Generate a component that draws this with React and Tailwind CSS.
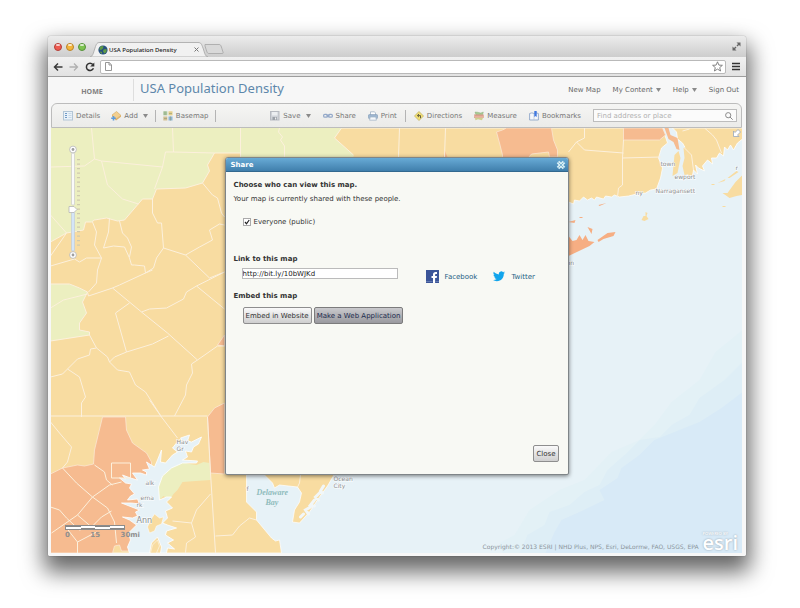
import React from "react";

const ui = "font-['DejaVu_Sans','Verdana',sans-serif]";

const countyLines = [
  "M92 128L95 159L85 166L51 167",
  "M95 159L102 161L163 167",
  "M173 128L174 152L166 152L163 167L155 189",
  "M174 152L215 153L241 153L241 128M241 153V157",
  "M102 161L108 185L123 199L139 204",
  "M51 215L67 233L51 256",
  "M51 242L67 233L84 230L86 222L92 222L95 220L107 218L118 221L125 220L143 199L153 199L157 189L186 188L203 183L210 171L208 165L215 153",
  "M51 266L75 259L80 262L87 258L102 258L95 245L97 232L93 222",
  "M102 258L98 270L97 283L89 292",
  "M110 218L109 232L104 248L114 246L125 247L130 258L132 265L135 265L145 266L146 273L120 285L113 288",
  "M120 221L123 233L128 238L132 247L130 257",
  "M153 199L153 213L158 223L162 223L164 248L157 258L154 268L146 273",
  "M164 248L186 255L210 278L225 272",
  "M186 255L200 247L213 240L210 230L220 224L225 225",
  "M203 183L213 195L218 198L222 213L225 217",
  "M51 284L70 284L80 288L88 292L83 302L87 313L80 323L80 330L90 332L90 335L51 341",
  "M51 308L64 300L88 294",
  "M88 292L89 296L113 288M153 270L146 273",
  "M113 288L142 312L168 333L198 360L218 346L225 346",
  "M142 312L150 309L167 308L184 299L187 292L197 286L225 272M197 286L225 309",
  "M130 303L116 313L127 352",
  "M110 362L115 357L127 352L153 344L169 336",
  "M90 335L97 348L108 357L110 362L118 370L130 372L136 385L146 392L162 417L178 438",
  "M97 348L91 349L90 355L78 359L68 369L63 374L51 377",
  "M68 369L80 377L86 397L82 403L82 417",
  "M198 360L192 364L193 373L187 385L186 395L175 416",
  "M51 416L208 416M150 400L162 417",
  "M51 422L60 433L72 447L68 462L63 468L77 483L93 497L110 485L122 482",
  "M95 465L105 472L107 480L113 485M112 463H131V478H112Z",
  "M93 497L78 515L52 533M51 507L60 510L67 518L80 530L92 527L102 517L112 511M78 515L92 527",
  "M93 497L108 508L115 522L117 543M67 528L78 542V553M78 542L97 532",
  "M208 417L211 473L216 553M211 494L197 510L192 523L196 537L187 543L186 553",
  "M216 536L233 535L240 526L250 518L257 520M173 521L192 523",
  "M280 128L279 132L283 137L281 140L285 146L285 157",
  "M342 128L335 138L354 155",
  "M400 128L399 157M446 128L445 157",
  "M301 475L300 483L298 487",
];

const eastLines = [
  "M624 140L623 158L661 157M623 158V185L619 188L618 197",
  "M624 153L585 150L577 142L569 152M585 128V138L577 142",
  "M705 128L713 135L717 140L722 153M683 131L690 129M685 148L692 155L694 170",
];

function MapCanvas() {
  return (
    <svg
      className="absolute inset-0 h-full w-full"
      viewBox="51 128 692 425"
      preserveAspectRatio="xMidYMid slice"
      aria-hidden="true"
    >
      <rect x="51" y="128" width="692" height="425" fill="#e7f2f7" />
      {/* ocean depth */}
      <path d="M743 330L716 352L700 380L672 402L655 425L640 440L612 452L585 480L560 490L530 510L515 535L500 543L503 553H743Z" fill="#e3f1f6" />
      <path d="M743 362L725 380L700 398L690 415L672 425L660 437L640 440L625 455L608 470L600 485L585 492L570 505L550 512L545 525L528 535L520 553H743Z" fill="#deeef6" />
      <path d="M743 392L722 408L700 422L680 430L655 440L640 455L622 468L618 478L600 490L605 500L580 512L562 520L555 532L546 553H743Z" fill="#d8eaf7" />

      {/* mainland */}
      <path d="M51 128H625L663 128L668 143L662 148L659 158L663 168L661 178L657 189L651 190L646 193L637 194L629 196L620 197L615 195L612 197L606 196L604 199L597 197L595 200L592 198L588 200L584 197L580 201L575 200L574 204L569 202L556 206L335 474L328 486L320 497L310 512L300 523L293 522L295 510L300 502L302 493L298 487L280 485L275 488L273 483L265 475L247 475L247 502L257 512L257 520L272 538L276 541L280 540L282 553H51Z" fill="#f8dca1" stroke="#fff" strokeWidth="0.7" />
      <path d="M673 128H743V139L738 143L734 150L731 145L728 150L725 147L724 156L720 153L717 158L712 158L713 164L708 160L703 166L705 171L699 168L696 165L698 174L694 170L693 176L688 176L690 165L687 150L683 143L678 139L677 132Z" fill="#f8dca1" stroke="#fff" strokeWidth="0.8" />
      <path d="M675 155L679 151L681 158L678 173L673 176L674 165Z" fill="#f8dca1" />
      <path d="M684 148L690 146L693 158L691 174L685 175L683 166L685 158Z" fill="#f8dca1" />
      <path d="M743 175L736 182L728 193L723 193L730 198L737 196L743 195ZM642 220L644 216L646 216V212L648 213L647 216L649 219L645 221ZM718 183L726 179L725 181ZM728 178L737 171L739 172L730 178ZM712 184H715V185H712ZM723 206H726V207H723Z" fill="#f8dca1" />

      {/* low density */}
      <path d="M51 128H342L335 138L354 155V157H241V153H215L208 165L210 171L203 183L186 188L157 189L153 199H143L125 220L118 221L107 218L95 220L92 222H86L84 230L67 233L51 242Z" fill="#ecefc0" />
      <path d="M51 284L70 284L80 288L88 292L83 302L87 313L80 323V330L90 332V335L51 341Z" fill="#ecefc0" />

      {/* high density */}
      <path d="M103 417H126L127 430L133 443L147 453L152 462L152 500L140 530L130 551H122L120 545L115 546L113 553H51V474L63 468L78 465L85 466L94 464L95 450Z" fill="#f6bb90" stroke="#fbe6d2" strokeWidth="0.8" />
      <path d="M208 417L215 408L225 403V474L211 473ZM225 335L218 345L225 346Z" fill="#f6bb90" stroke="#fbe6d2" strokeWidth="0.8" />
      <path d="M497 132L503 130L507 128H552L554 140L558 150V157H550L549 152L532 154L527 160H503V155L500 143Z" fill="#f6bb90" stroke="#fbe6d2" strokeWidth="0.8" />
      <path d="M445 150L448 157H444Z" fill="#f6bb90" />
      <path d="M624 128H663L666 135L660 140H624Z" fill="#f6bb90" stroke="#fbe6d2" strokeWidth="0.8" />
      <path d="M665 128H669L671 135L678 138L680 150L677 149L674 142L669 139Z" fill="#f6bb90" />
      <path d="M569 236L573 241L577 240L580 235L583 240L586 235L589 241L595 242L590 246L569 256ZM598 240L608 233L616 232L614 236L604 239L599 242ZM569 222L576 220L575 223ZM588 227L593 229L592 234ZM599 205L607 203L600 206ZM580 217H583V218H580Z" fill="#f6ae83" />

      {/* Chesapeake Bay */}
      <path d="M168 468L183 462L190 464L197 465L204 462L210 463L211 480L196 481L183 482L178 490L174 494L170 500L164 496L160 500L158 487L162 476Z" fill="#ecefc0" />
      <path
        d="M202 437L199 444L194 447L192 452L186 451L188 457L183 460L198 461L197 463L183 463L172 468L163 476L159 487L160 500L167 497L172 497L167 502L173 508L166 511L168 518L163 523L168 525L177 528L167 531L166 535L174 540L168 543L175 549L168 548L167 553H161L162 547L158 537L152 543L150 553H130L128 547L131 540L129 533L137 525L130 520L123 517L133 518L138 516L136 512L140 510L122 503L132 503L140 504L138 499L128 500L131 496L135 494L130 488L132 484L126 483L120 478L126 479L123 475L131 478L138 480L133 473L141 473L147 475L147 472L143 470L150 469L147 462L155 467L158 460L162 450L161 462L166 463L173 455L178 452L173 448L177 443L183 441L181 438L190 435L188 441L192 442Z"
        fill="#e7f2f7"
        stroke="#fff"
        strokeWidth="0.8"
        strokeLinejoin="round"
      />
      <path d="M155 514L160 518L164 517L162 524L157 526L155 531L150 533L148 527L151 520ZM153 545L158 540L160 546L157 553H151Z" fill="#f8dca1" stroke="#fff" strokeWidth="0.5" />
      <path d="M324 486l-3 5 2 2M320 493l-4 4 3 3M315 500l-4 5 4 1M311 507l-5 3 3 4M304 514l-3 3" stroke="#f2f7f8" strokeWidth="3" strokeLinecap="round" fill="none" />

      <g fill="none" stroke="#fcf0dc" strokeWidth="1" strokeLinejoin="round">
        {countyLines.concat(eastLines).map((d) => (
          <path key={d} d={d} />
        ))}
      </g>

      <g
        fontFamily="'DejaVu Sans', sans-serif"
        fontSize="6"
        fill="#8d8f90"
        stroke="#fff"
        strokeWidth="1.4"
        strokeOpacity="0.7"
        paintOrder="stroke"
      >
        <text x="177" y="444">Hav</text>
        <text x="177" y="451">Gr</text>
        <text x="146" y="485">alk</text>
        <text x="141" y="500">erna</text>
        <text x="137" y="507">rk</text>
        <text x="137" y="523" fontSize="8">Ann</text>
        <text x="334" y="481">Ocean</text>
        <text x="334" y="488">City</text>
        <text x="247" y="491">f</text>
        <text x="661" y="166">town</text>
        <text x="675" y="179">ewport</text>
        <text x="656" y="193">Narragansett</text>
        <text x="636" y="195">ny</text>
        <text x="567" y="265">on</text>
        <text x="736" y="170">r</text>
      </g>
      <g fontFamily="'Liberation Serif', serif" fontStyle="italic" fontWeight="bold" fontSize="8" fill="#8fbcbc">
        <text x="257" y="495">Delaware</text>
        <text x="266" y="505">Bay</text>
      </g>
    </svg>
  );
}

function Caret() {
  return (
    <svg className="h-1 w-[5px]" viewBox="0 0 5 4" aria-hidden="true">
      <path d="M0 0H5L2.5 4Z" fill="#8a8a8a" />
    </svg>
  );
}

const icons = {
  details: (
    <>
      <rect x="0.5" y="0.5" width="9" height="8.5" fill="#eaf2f9" stroke="#b3c6d6" />
      <path d="M2 2.5H4M2 4.5H4M2 6.5H4" stroke="#6f9ac6" />
      <path d="M5.5 2.5H8.5M5.5 4.5H8.5M5.5 6.5H8.5" stroke="#c6d8e7" />
    </>
  ),
  add: (
    <>
      <path d="M1 4L5.5 0.5L10 4.5L5 8Z" fill="#f3cf8e" stroke="#d3a65c" strokeWidth="0.6" />
      <path d="M1 4L5 8L10 4.5V5.8L5 9.4L1 5.5Z" fill="#dcb069" />
      <path d="M2.5 5V9.5M0.2 7.2H4.8" stroke="#5d9bdc" strokeWidth="1.6" />
    </>
  ),
  basemap: (
    <>
      <rect x="0.3" y="0.3" width="4" height="4" fill="#a9c79d" />
      <rect x="5.5" y="0.3" width="4" height="4" fill="#e5cf88" />
      <rect x="0.3" y="5.5" width="4" height="4" fill="#d3bf93" />
      <rect x="5.5" y="5.5" width="4" height="4" fill="#8fb5d2" />
      <path d="M2 0.5V4M7.5 5.5V9.5M1 7.5H4M6 2.5H9" stroke="#8f9a7c" strokeWidth="0.6" />
    </>
  ),
  save: (
    <>
      <rect x="0.5" y="0.5" width="8.5" height="8.5" fill="#cfd2d8" stroke="#b7bac1" />
      <rect x="2" y="1" width="5.5" height="3.5" fill="#eceef1" />
      <rect x="2.5" y="6" width="4.5" height="3" fill="#9ca1a9" />
      <rect x="5" y="6.5" width="1.2" height="2" fill="#eee" />
    </>
  ),
  share: (
    <g fill="none" stroke="#94a9c9" strokeWidth="1.2">
      <rect x="0.6" y="3.4" width="4" height="2.8" rx="1.3" />
      <rect x="5.4" y="3.4" width="4" height="2.8" rx="1.3" />
      <path d="M3.2 4.8H6.8" />
    </g>
  ),
  print: (
    <>
      <path d="M2.5 4V0.8H6.5L7.5 2V4" fill="#fff" stroke="#9fb1c4" strokeWidth="0.8" />
      <rect x="0.4" y="3.6" width="9.2" height="4" rx="1" fill="#9fb8d2" stroke="#7f98b3" strokeWidth="0.6" />
      <path d="M2.2 6H7.8L8.4 9.2H1.6Z" fill="#f5f8fb" stroke="#9fb1c4" strokeWidth="0.7" />
    </>
  ),
  directions: (
    <>
      <path d="M5 0.5L9.5 5L5 9.5L0.5 5Z" fill="#f3e074" stroke="#c3b468" strokeWidth="0.8" />
      <path d="M6.5 7.2V4.6H4M5 3.1L3.3 4.6L5 6.1" fill="none" stroke="#55503a" strokeWidth="0.9" />
    </>
  ),
  measure: (
    <>
      <path d="M1 1L2 4H8.6L9.3 1L6.8 2L3.5 1.2Z" fill="#a6ca92" stroke="#83a873" strokeWidth="0.4" />
      <rect x="0.4" y="3.8" width="9.2" height="3" fill="#efb6a3" stroke="#d39a88" strokeWidth="0.5" />
      <path d="M2 4V5.3M4 4V5.3M6 4V5.3M8 4V5.3" stroke="#a05f50" strokeWidth="0.5" />
      <path d="M1 6.8H9L8 9.3L4 8.3L1.4 9.2Z" fill="#cfcf8f" />
    </>
  ),
  bookmarks: (
    <>
      <path d="M0.6 2.5Q3 1.2 5 2.5Q7 1.2 9.4 2.5V9H0.6Z" fill="#f4f7fb" stroke="#8fa6c8" strokeWidth="0.9" />
      <path d="M5 2.5V9" stroke="#b4c3d8" strokeWidth="0.7" />
      <path d="M5.3 0H7.7V6L6.5 5L5.3 6Z" fill="#3f78e0" />
    </>
  ),
};

function Tool({ icon, label, caret }) {
  return (
    <button type="button" className="flex items-center gap-[3px] whitespace-nowrap text-[7px] leading-[10px] text-[#777]">
      <svg className="size-[10px] shrink-0" viewBox="0 0 10 10" aria-hidden="true">
        {icons[icon]}
      </svg>
      {label}
      {caret && (
        <span className="ml-[2px]">
          <Caret />
        </span>
      )}
    </button>
  );
}

function Divider() {
  return <span className="-mx-1 h-3 w-px shrink-0 bg-[#b4b4b4]" />;
}

function TitleBar() {
  return (
    <div className="flex h-[21px] items-end bg-linear-to-b from-[#ececec] to-[#cdcdcd] pr-[5px]">
      <div className="flex gap-1 self-center pl-[6px]">
        {[
          ["Close window", "bg-[#ee5a50] border-[#b23f38]"],
          ["Minimise", "bg-[#f3b63c] border-[#b9832a]"],
          ["Zoom", "bg-[#7dc350] border-[#55913a]"],
        ].map(([label, tone]) => (
          <button
            key={label}
            type="button"
            aria-label={label}
            className={`flex size-2 justify-center rounded-full border ${tone}`}
          >
            <span className="h-[2px] w-1 rounded-full bg-white/70" />
          </button>
        ))}
      </div>
      <div className="relative ml-1 h-[15px] w-[118px]">
        <svg className="absolute inset-0 h-full w-full" viewBox="0 0 118 15" aria-hidden="true">
          <path d="M0 15C3 14 3 12 5 6C6.500 1.500 7 0.500 10 0.500H108C111 0.500 111.500 2 113 6C115 12 115 14 118 15Z" fill="#f1f1f1" stroke="#a5a5a5" strokeWidth="0.8" />
        </svg>
        <div className="relative flex h-full items-center gap-px pr-[9px] pl-2 text-[#222]">
          <svg className="size-[10px] shrink-0" viewBox="0 0 10 10" aria-hidden="true">
            <circle cx="5" cy="5" r="4.600" fill="#27507f" />
            <path d="M2 2Q4 0.500 5.500 1.500L5 3.500L3 5L1.200 4.500ZM5.500 4.500L8.500 4L8.500 7L6.500 8.500L5 6.500ZM2 6.500L4 7L4 9L2.500 8Z" fill="#5f9a45" />
          </svg>
          <span className="whitespace-nowrap font-['Noto_Sans',sans-serif] text-[6px] leading-[10px] font-medium">USA Population Density</span>
          <button type="button" aria-label="Close tab" className="ml-auto">
            <svg className="size-[5px]" viewBox="0 0 5 5" aria-hidden="true">
              <path d="M0.500 0.500L4.500 4.500M4.500 0.500L0.500 4.500" stroke="#777" />
            </svg>
          </button>
        </div>
      </div>
      <button type="button" aria-label="New tab" className="self-center pt-1">
        <svg className="-ml-1 h-[10px] w-5" viewBox="0 0 20 10" aria-hidden="true">
          <path d="M1 0.500H15C17 0.500 17 2 19 8C19.500 9.500 19 9.500 17 9.500H5C3 9.500 3 8 1 2Z" fill="#d9d9d9" stroke="#aaa" strokeWidth="0.900" />
        </svg>
      </button>
      <button type="button" aria-label="Full screen" className="ml-auto self-center">
        <svg className="size-[9px]" viewBox="0 0 9 9" aria-hidden="true">
          <path d="M4.500 0.500H8.500V4.500ZM0.500 4.500V8.500H4.500Z" fill="#666" />
          <path d="M7 2L5 4M4 5L2 7" stroke="#666" strokeWidth="1.400" />
        </svg>
      </button>
    </div>
  );
}

function AddressBar() {
  return (
    <div className="flex h-5 items-center border-b border-[#9d9d9d] bg-linear-to-b from-[#f1f1f1] to-[#e2e2e2] pr-[6px] pl-[5px]">
      <div className="flex gap-[6px]">
        <button type="button" aria-label="Back">
          <svg className="size-[10px]" viewBox="0 0 10 10" fill="none" stroke="#3a3a3a" strokeWidth="1.500" aria-hidden="true">
            <path d="M9.500 5H1.500M5 1.500L1.500 5L5 8.500" />
          </svg>
        </button>
        <button type="button" aria-label="Forward">
          <svg className="size-[10px]" viewBox="0 0 10 10" fill="none" stroke="#b0b0b0" strokeWidth="1.300" aria-hidden="true">
            <path d="M0.500 5H8.500M5 1.500L8.500 5L5 8.500" />
          </svg>
        </button>
        <button type="button" aria-label="Reload">
          <svg className="size-[10px]" viewBox="0 0 10 10" aria-hidden="true">
            <path d="M7.800 2.600A3.600 3.600 0 1 0 8.400 6.200" fill="none" stroke="#333" strokeWidth="1.500" />
            <path d="M9.300 0.500V4.600H5.200Z" fill="#333" />
          </svg>
        </button>
      </div>
      <div className="ml-[5px] flex h-[14px] flex-1 items-center rounded-xs border border-[#b9b9b9] bg-white pr-[2px] pl-1">
        <svg className="h-[9px] w-[7px]" viewBox="0 0 7 9" aria-hidden="true">
          <path d="M0.500 0.500H4.200L6.500 2.800V8.500H0.500ZM4 0.500V3H6.500" fill="#fff" stroke="#8b8b8b" strokeWidth="0.900" />
        </svg>
        <input aria-label="Address" className="h-3 min-w-0 flex-1 px-1 text-[8px] outline-none" />
        <button type="button" aria-label="Bookmark this page">
          <svg className="size-[11px]" viewBox="0 0 11 11" aria-hidden="true">
            <path d="M5.500 0.800L6.900 4.100L10.400 4.300L7.700 6.600L8.600 10L5.500 8.100L2.400 10L3.300 6.600L0.600 4.300L4.100 4.100Z" fill="#fff" stroke="#777" strokeWidth="0.900" />
          </svg>
        </button>
      </div>
      <button type="button" aria-label="Menu" className="ml-[6px]">
        <svg className="h-[9px] w-2" viewBox="0 0 8 9" aria-hidden="true">
          <path d="M0 1.500H8M0 4.500H8M0 7.500H8" stroke="#333" strokeWidth="1.600" />
        </svg>
      </button>
    </div>
  );
}

function SiteHeader() {
  return (
    <header className="flex h-[26px] items-center bg-[#f7f7f7] text-[7px] leading-[10px] text-[#666]">
      <a href="#home" className="w-[83px] border-r border-[#dedede] py-1 pt-2 text-center font-['Open_Sans',sans-serif] font-bold text-[#808080]">
        HOME
      </a>
      <h1 className="ml-[6px] pb-1 font-['Noto_Sans',sans-serif] text-[13px] leading-[18px] whitespace-nowrap text-[#5d87ab]">USA Population Density</h1>
      <nav className="ml-auto flex gap-3 pr-[3px] whitespace-nowrap">
        <a href="#new">New Map</a>
        <a href="#content" className="flex items-center gap-[3px]">
          My Content <Caret />
        </a>
        <a href="#help" className="flex items-center gap-[3px]">
          Help <Caret />
        </a>
        <a href="#signout">Sign Out</a>
      </nav>
    </header>
  );
}

function MapToolbar() {
  return (
    <div className="flex h-[25px] items-center rounded-t-md border border-[#bcbcbc] bg-linear-to-b from-[#f5f5f4] to-[#ebebe9] pr-1 pl-[11px]">
      <div className="flex items-center gap-[11px]">
        <Tool icon="details" label="Details" />
        <Tool icon="add" label="Add" caret />
        <Divider />
        <Tool icon="basemap" label="Basemap" />
        <Divider />
      </div>
      <div className="ml-auto flex items-center gap-3">
        <Tool icon="save" label="Save" caret />
        <Tool icon="share" label="Share" />
        <Tool icon="print" label="Print" />
        <Divider />
        <Tool icon="directions" label="Directions" />
        <Tool icon="measure" label="Measure" />
        <Tool icon="bookmarks" label="Bookmarks" />
        <div className="flex h-[13px] w-36 items-center border border-[#bdbdbd] bg-[#fbfbfb] px-[3px]">
          <input aria-label="Find address or place" placeholder="Find address or place" className="min-w-0 flex-1 text-[7px] leading-[10px] outline-none placeholder:text-[#b0b0b0]" />
          <svg className="size-2" viewBox="0 0 8 8" fill="none" stroke="#8a8a8a" aria-hidden="true">
            <circle cx="3.200" cy="3.200" r="2.600" />
            <path d="M5 5L7.700 7.700" />
          </svg>
        </div>
      </div>
    </div>
  );
}

function ZoomControl() {
  return (
    <svg className="absolute top-[17px] left-[16px] h-[115px] w-4" viewBox="0 0 16 115" aria-hidden="true">
      <rect x="4.500" y="8" width="3" height="52" rx="1" fill="#fafafa" stroke="#c6c6c6" strokeWidth="0.600" />
      <rect x="4.500" y="64" width="3" height="42" rx="1" fill="#d4e5f8" stroke="#bcc8d8" strokeWidth="0.600" />
      {[4.5, 110].map((cy) => (
        <g key={cy}>
          <circle cx="6" cy={cy} r="3.400" fill="#fff" stroke="#b5b5b5" strokeWidth="0.800" />
          <circle cx="6" cy={cy} r="1.400" fill="#9f9f9f" />
        </g>
      ))}
      <path d="M11.500 14V102" stroke="#cfcaae" strokeWidth="3" strokeDasharray="1.300 3.200" />
      <path d="M2 61.500H7L10 64.500L7 67.500H2Z" fill="#fff" stroke="#b5b5b5" strokeWidth="0.800" />
    </svg>
  );
}

function ScaleBar() {
  return (
    <div className="absolute bottom-[14px] left-[14px] w-[75px] text-[7px] leading-[8px] font-bold text-[#8f8f8f]">
      <div className="flex h-[5px] w-[60px] border border-[#8c8c8c]">
        <span className="flex-1 border-b-2 border-white bg-[#858585]" />
        <span className="flex-1 border-t-2 border-white bg-[#858585]" />
        <span className="flex-1 border-b-2 border-white bg-[#858585]" />
        <span className="flex-1 border-t-2 border-white bg-[#858585]" />
      </div>
      <div className="mt-px flex justify-between">
        <span>0</span>
        <span>15</span>
        <span>30mi</span>
      </div>
    </div>
  );
}

function ShareDialog() {
  return (
    <section
      role="dialog"
      aria-labelledby="share-title"
      className="flex h-[318px] w-[344px] flex-col rounded-t-[3px] rounded-b-xs border border-[#7f8588] bg-[#f8f9f4] text-[7px] leading-[10px] text-[#333] shadow-[0_1px_4px_rgba(0,0,0,0.5)]"
    >
      <header className="flex h-[14px] shrink-0 items-center justify-between rounded-t-xs border-b border-[#33698f] bg-linear-to-b from-[#68abd6] to-[#407fac] pr-[2px] pl-[5px]">
        <h2 id="share-title" className="font-bold text-white">Share</h2>
        <button type="button" aria-label="Close dialog">
          <svg className="size-[10px]" viewBox="0 0 10 10" aria-hidden="true">
            <path d="M2 2L8 8M8 2L2 8" stroke="#d6eef5" strokeWidth="3.600" />
            <path d="M2.500 2.500L7.500 7.500M7.500 2.500L2.500 7.500" stroke="#7fb6d3" strokeWidth="1" />
          </svg>
        </button>
      </header>
      <div className="flex flex-1 flex-col px-2 pt-2 pb-3">
        <h3 className="font-bold">Choose who can view this map.</h3>
        <p className="mt-1">Your map is currently shared with these people.</p>
        <label className="mt-[13px] ml-[9px] flex items-center gap-[3px]">
          <span className="relative flex size-2">
            <input type="checkbox" defaultChecked className="peer size-2 appearance-none border border-[#aaa] bg-white" />
            <svg className="pointer-events-none absolute inset-0 hidden size-2 peer-checked:block" viewBox="0 0 8 8" aria-hidden="true">
              <path d="M2 4L3.500 5.800L6.200 2" fill="none" stroke="#222" strokeWidth="1.200" />
            </svg>
          </span>
          Everyone (public)
        </label>
        <label htmlFor="map-link" className="mt-[27px] font-bold">Link to this map</label>
        <div className="mt-1 ml-2 flex h-[15px]">
          <input
            id="map-link"
            defaultValue="http://bit.ly/10bWJKd"
            className="h-[11px] w-[156px] border border-[#bbb] bg-white text-[7px] leading-[9px] text-[#222] outline-none"
          />
          <a href="#facebook" className="ml-7 flex items-center gap-[6px] self-end text-[#1f5f85]">
            <svg className="size-[13px]" viewBox="0 0 13 13" aria-hidden="true">
              <rect width="13" height="13" fill="#3b5598" />
              <path d="M7 13V8H5.500V6H7V4.600C7 2.900 8 2 9.600 2H11V4H10C9.300 4 9.100 4.300 9.100 4.900V6H11L10.700 8H9.100V13Z" fill="#fff" />
              <path d="M0 11.500H6.500M9.500 11.500H13" stroke="#6d84b8" strokeWidth="0.800" />
            </svg>
            Facebook
          </a>
          <a href="#twitter" className="ml-4 flex items-center gap-[6px] self-end text-[#1f5f85]">
            <svg className="h-[13px] w-3" viewBox="0 1 24 23" aria-hidden="true">
              <path
                d="M23.950 4.570a10 10 0 01-2.820.77 4.960 4.960 0 002.160-2.720 9.900 9.900 0 01-3.120 1.190 4.920 4.920 0 00-8.380 4.480C7.690 8.100 4.070 6.130 1.640 3.160a4.920 4.920 0 001.520 6.570 4.900 4.900 0 01-2.230-.61v.06a4.920 4.920 0 003.950 4.830 5 5 0 01-2.210.08 4.940 4.940 0 004.600 3.420A9.870 9.870 0 010 19.540a14 14 0 007.550 2.210c9.050 0 14-7.500 14-13.980 0-.21 0-.42-.02-.63a9.940 9.940 0 002.460-2.550z"
                fill="#12a5ec"
              />
            </svg>
            Twitter
          </a>
        </div>
        <h3 className="mt-2 font-bold">Embed this map</h3>
        <div className="mt-[6px] ml-[9px] flex gap-[2px]">
          <button type="button" className="h-[17px] rounded-xs border border-[#8e8e8e] bg-linear-to-b from-[#fafafa] to-[#cfcfcf] px-[2px] whitespace-nowrap">
            Embed in Website
          </button>
          <button type="button" className="h-[17px] rounded-xs border border-[#7c7c7c] bg-linear-to-b from-[#cacacd] to-[#9a9a9f] px-[2px] whitespace-nowrap text-[#1d2b4d]">
            Make a Web Application
          </button>
        </div>
        <button type="button" className="mt-auto mr-px h-[17px] self-end rounded-xs border border-[#8e8e8e] bg-linear-to-b from-[#fafafa] to-[#cfcfcf] px-[2px]">
          Close
        </button>
      </div>
    </section>
  );
}

export default function App() {
  return (
    <div className={`flex min-h-screen flex-col bg-white pt-9 pr-[54px] pb-[52px] pl-12 ${ui}`}>
      <div className="flex flex-1 flex-col overflow-hidden rounded-t-[3px] rounded-b-xs bg-[#fbfbfb] shadow-[0_0_1px_rgba(0,0,0,0.6),0_12px_22px_4px_rgba(0,0,0,0.6)]">
        <TitleBar />
        <AddressBar />
        <div className="flex flex-1 flex-col bg-[#f7f7f7] pr-1 pb-[3px] pl-[3px]">
          <SiteHeader />
          <MapToolbar />
          <main className="relative flex-1">
            <MapCanvas />
            <ZoomControl />
            <ScaleBar />
            <button type="button" aria-label="Show overview map" className="absolute top-px right-px">
              <svg className="size-2" viewBox="0 0 8 8" aria-hidden="true">
                <path d="M0.500 2V7.500H6L4.500 6L7.500 3L5 0.500L2 3.500Z" fill="#fff" stroke="#98a7bb" strokeWidth="0.800" />
              </svg>
            </button>
            <div className="absolute right-1 bottom-[3px] flex items-end gap-1 text-[6px] leading-[7px] text-[#8b959c]">
              <p className="whitespace-nowrap">Copyright:© 2013 ESRI | NHD Plus, NPS, Esri, DeLorme, FAO, USGS, EPA</p>
              <div className="font-['Open_Sans',sans-serif] font-semibold text-white [text-shadow:0_0_2px_#8e9ba5]">
                <div className="text-[4px] leading-[4px]">POWERED BY</div>
                <div className="text-[20px] leading-[14px]">esri</div>
              </div>
            </div>
            <div className="relative flex justify-center pt-[29px] pb-[78px]">
              <ShareDialog />
            </div>
          </main>
        </div>
      </div>
    </div>
  );
}
